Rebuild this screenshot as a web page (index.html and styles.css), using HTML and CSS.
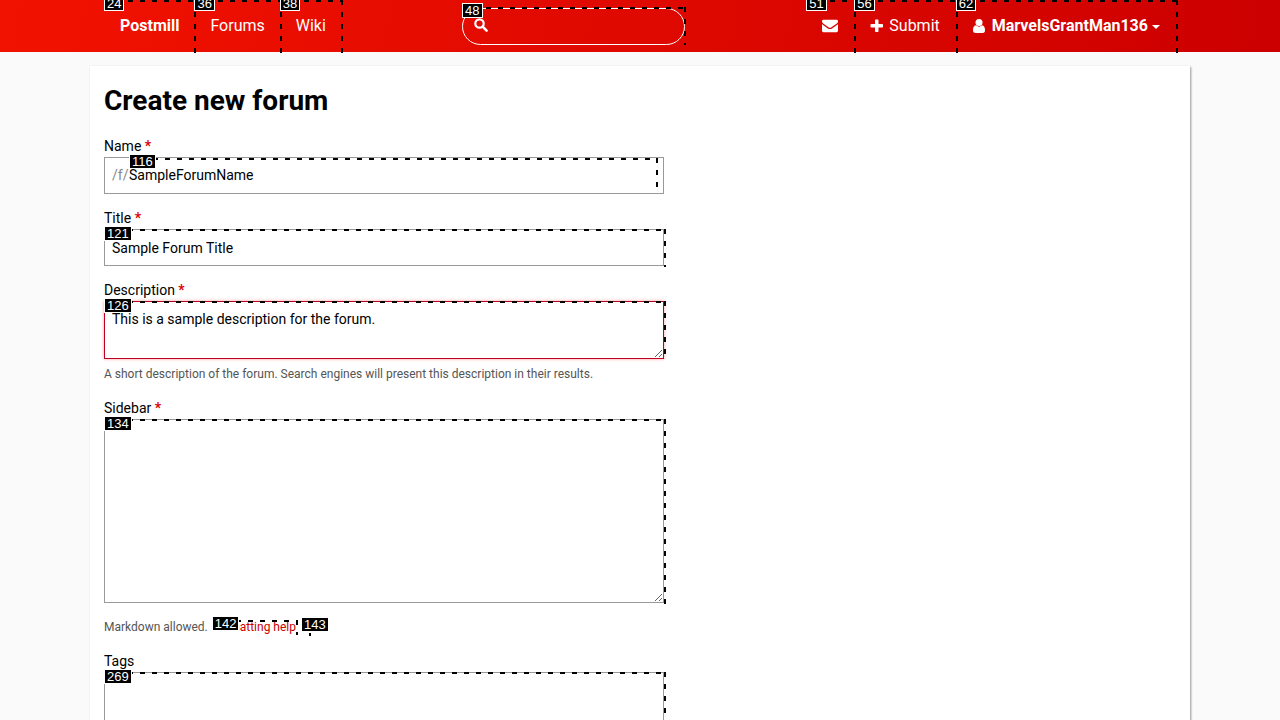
FILE: index.html
```html
<!DOCTYPE html>
<html lang="en">
<head>
<meta charset="utf-8">
<meta name="viewport" content="width=device-width, initial-scale=1">
<title>Create new forum</title>
<link rel="stylesheet" href="styles.css">
</head>
<body>
<header class="site-header">
  <nav class="site-nav">
    <a class="nav-item nav-brand" href="#">Postmill<span class="mark"><span class="tag">24</span></span></a>
    <a class="nav-item" href="#">Forums<span class="mark"><span class="tag">36</span></span></a>
    <a class="nav-item" href="#">Wiki<span class="mark"><span class="tag">38</span></span></a>
    <form class="search" role="search">
      <svg class="icon search-icon" viewBox="0 0 14 14" aria-hidden="true"><circle cx="5.5" cy="5.5" r="4.2" fill="none" stroke="currentColor" stroke-width="2.2"/><path d="M8.7 8.7 12.6 12.6" stroke="currentColor" stroke-width="2.6" stroke-linecap="round"/></svg>
      <input class="search-input" type="search" aria-label="Search">
      <span class="mark"><span class="tag">48</span></span>
    </form>
    <a class="nav-item" href="#" aria-label="Messages"><svg class="icon icon-mail" viewBox="0 0 16 14" aria-hidden="true"><path fill="currentColor" d="M0 2.2Q0 .8 1.4.8H14.600Q16 .8 16 2.200C16 3.500 15.200 4.300 14.100 5.100L9.500 8.300Q8 9.400 6.500 8.300L1.900 5.100C.8 4.300 0 3.300 0 2.200ZM0 5.100Q.4 5.600 1 6L5.600 9.200Q8 11 10.400 9.200L15 6Q15.600 5.600 16 5.100V11.800Q16 13.200 14.600 13.200H1.400Q0 13.200 0 11.800Z"/></svg><span class="mark"><span class="tag">51</span></span></a>
    <a class="nav-item nav-submit" href="#"><svg class="icon icon-plus" viewBox="0 0 14 14" aria-hidden="true"><path fill="currentColor" d="M5 1.300Q5 .5 5.800.5H7.700Q8.500.5 8.500 1.300V5H12.200Q13 5 13 5.800V7.700Q13 8.500 12.200 8.500H8.500V12.200Q8.500 13 7.700 13H5.800Q5 13 5 12.200V8.500H1.300Q.5 8.500.5 7.700V5.800Q.5 5 1.300 5H5Z"/></svg>Submit<span class="mark"><span class="tag">56</span></span></a>
    <button class="nav-item nav-user" type="button"><svg class="icon icon-user" viewBox="0 0 12 14" aria-hidden="true"><circle cx="6" cy="3.500" r="3.500" fill="currentColor"/><path fill="currentColor" d="M3 6.300Q6 9 9 6.300C11.300 6.500 12 9 12 11.300Q12 14 9.700 14H2.300Q0 14 0 11.300C0 9 .7 6.500 3 6.300Z"/></svg>MarvelsGrantMan136<span class="caret"></span><span class="mark"><span class="tag">62</span></span></button>
  </nav>
</header>
<main class="page">
  <h1 class="title">Create new forum</h1>
  <form class="form">
    <div class="field">
      <label class="label" for="name">Name <b class="required">*</b></label>
      <div class="control prefixed">
        <span class="prefix">/f/</span>
        <div class="prefixed-main">
          <input class="bare-input" id="name" type="text" value="SampleForumName">
          <span class="mark mark-inner"><span class="tag">116</span></span>
        </div>
      </div>
    </div>
    <div class="field">
      <label class="label" for="title">Title <b class="required">*</b></label>
      <div class="marked">
        <input class="control" id="title" type="text" value="Sample Forum Title">
        <span class="mark"><span class="tag">121</span></span>
      </div>
    </div>
    <div class="field">
      <label class="label" for="description">Description <b class="required">*</b></label>
      <div class="marked">
        <textarea class="control invalid" id="description" rows="2">This is a sample description for the forum.</textarea>
        <span class="mark"><span class="tag">126</span></span>
      </div>
      <p class="help">A short description of the forum. Search engines will present this description in their results.</p>
    </div>
    <div class="field">
      <label class="label" for="sidebar">Sidebar <b class="required">*</b></label>
      <div class="marked">
        <textarea class="control" id="sidebar" rows="8"></textarea>
        <span class="mark"><span class="tag">134</span></span>
      </div>
      <p class="help help-spaced">Markdown allowed. <a class="help-link" href="#">Formatting help<span class="mark"><span class="tag">142</span></span></a> <a class="help-icon" href="#" aria-label="Open help"><span class="mark"><span class="tag">143</span></span></a></p>
    </div>
    <div class="field">
      <label class="label" for="tags">Tags</label>
      <div class="marked">
        <textarea class="control" id="tags" rows="3"></textarea>
        <span class="mark"><span class="tag">269</span></span>
      </div>
    </div>
  </form>
</main>
</body>
</html>
```
FILE: styles.css
```css
* { box-sizing: border-box; }

body {
  margin: 0;
  background: #fafafa;
  color: #000;
  font: 14px/21px Roboto, "Liberation Sans", sans-serif;
}

.site-header {
  background: linear-gradient(100deg, #f21200, #c00);
  padding: 0 14px;
}

.site-nav {
  display: flex;
  align-items: center;
  max-width: 1072px;
  margin: 0 auto;
}

.nav-item {
  position: relative;
  display: flex;
  align-items: center;
  height: 52px;
  padding: 0 15px 0 16px;
  border: 0;
  background: none;
  color: #fff;
  font: 16px/24px Roboto, "Liberation Sans", sans-serif;
  text-decoration: none;
}

.nav-brand, .nav-user { font-weight: 700; }
.nav-submit { padding-right: 16px; }
.nav-user { padding: 0 16px 0 17px; }

.icon { display: block; flex: none; height: 14px; }
.icon-mail { width: 16px; margin-right: 1px; }
.icon-plus { width: 14px; margin-right: 5px; }
.icon-user { width: 12px; margin-right: 7px; }

.caret {
  margin: 2px 0 0 4px;
  border: 4px solid transparent;
  border-top-color: currentColor;
  border-bottom: 0;
}

.search {
  position: relative;
  display: flex;
  align-items: center;
  width: 223px;
  height: 37px;
  margin: 1px auto 0;
  padding: 0 11px;
  border: 1px solid #fff;
  border-radius: 19px;
  color: #fff;
}

.search-icon { width: 14px; margin-bottom: 4px; }

.search-input {
  flex: 1;
  min-width: 0;
  padding: 0 8px;
  border: 0;
  outline: 0;
  background: none;
  color: inherit;
  font: inherit;
}

.page {
  max-width: 1100px;
  margin: 14px auto 0;
  padding: 14px;
  background: #fff;
  box-shadow: 1px 1px 2px rgba(0, 0, 0, .4);
}

.title { margin: 0 0 14px; font-size: 28px; line-height: 42px; }

.form { max-width: 560px; }
.field { margin-bottom: 14px; }
.label { display: block; }
.required { color: #e00000; }

.marked { position: relative; }

.control {
  display: block;
  width: 100%;
  margin: 0;
  padding: 7px;
  border: 1px solid #999;
  border-radius: 0;
  outline: 0;
  background: #fff;
  color: #000;
  font: inherit;
}

input.control, .prefixed { height: 37px; }
textarea.control { resize: vertical; }

.invalid { border-color: #c00020; box-shadow: 0 0 3px rgba(255, 0, 0, .4); }

.prefixed { display: flex; padding: 0 5px 0 7px; }
.prefix { width: 17px; line-height: 35px; color: #888; }
.prefixed-main { position: relative; flex: 1; display: flex; }
.bare-input {
  width: 100%;
  padding: 0;
  border: 0;
  outline: 0;
  background: none;
  color: #000;
  font: inherit;
}

.help { margin: 6px 0 0; font-size: 12px; line-height: 19px; color: #555; }
.help-spaced { margin-top: 15px; }
.help-link { position: relative; margin-left: 1px; color: #c00; text-decoration: none; }
.help-icon { position: relative; display: inline-block; width: 8px; height: 14px; margin-left: 2px; vertical-align: middle; }

/* Numbered dashed outline laid over an interactive element */
.mark {
  position: absolute;
  inset: 0 -2px -1px 0;
  background:
    repeating-linear-gradient(to right, #000 0 5px, transparent 5px 12px) top / 100% 2px no-repeat,
    repeating-linear-gradient(to bottom, #000 0 5px, transparent 5px 12px) right / 2px 100% no-repeat;
  pointer-events: none;
}

.mark-inner { inset: 0 0 5px 0; }
.search .mark { inset: -2px -2px -1px -1px; }

.tag {
  position: absolute;
  top: -4px;
  left: 0;
  padding: 0 2px;
  border: 1px solid #fff;
  background: #000;
  color: #fff;
  font: 13px/13px "Liberation Sans", Arial, sans-serif;
}

.marked .tag { top: -3px; }
```
